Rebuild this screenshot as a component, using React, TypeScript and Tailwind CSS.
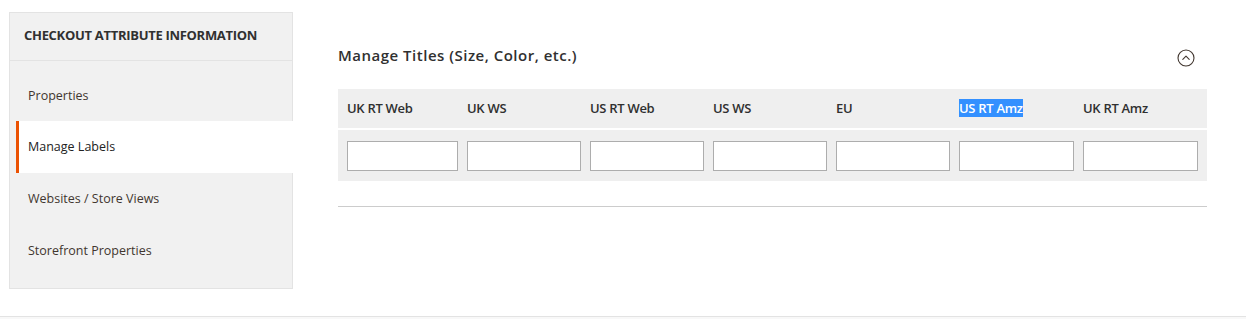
import React from 'react'

const tabs = [
  { label: 'Properties', h: 'h-[51px] pt-[2px]' },
  { label: 'Manage Labels', h: 'h-[52px]', active: true },
  { label: 'Websites / Store Views', h: 'h-[52px]' },
  { label: 'Storefront Properties', h: 'h-[52px]' },
]

const columns = ['UK RT Web', 'UK WS', 'US RT Web', 'US WS', 'EU', 'US RT Amz', 'UK RT Amz']

function CollapseIcon() {
  return (
    <svg width="18" height="18" viewBox="0 0 18 18" fill="none" stroke="#41362f" strokeWidth="1.1">
      <circle cx="9" cy="9" r="8" />
      <path d="M5.8 10.4 L9 7.2 L12.2 10.4" strokeLinecap="round" strokeLinejoin="round" />
    </svg>
  )
}

export default function App() {
  return (
    <div className="w-[1246px] h-[319px] bg-white flex flex-col overflow-hidden" style={{ fontFamily: '"Open Sans", sans-serif' }}>
      <div className="flex flex-1 min-h-0">
        {/* Sidebar */}
        <div className="ml-[9px] mt-[12px] w-[284px] h-[277px] bg-[#f1f1f1] border border-[#e3e3e3] shrink-0">
          <div className="h-[48px] flex items-center px-[14px] pb-[2px] border-b border-[#e3e3e3]">
            <span className="text-[13px] font-bold text-[#303030] tracking-[-0.3px]">CHECKOUT ATTRIBUTE INFORMATION</span>
          </div>
          <div className="pt-[9px]">
            {tabs.map(t => (
              <div
                key={t.label}
                className={`${t.h} flex items-center text-[12.5px] ${t.active
                  ? 'ml-[6px] mr-[-1px] bg-white border-l-[3px] border-[#eb5202] pl-[9px] text-[#222222] font-medium'
                  : 'pl-[18px] text-[#41362f]'}`}
              >
                {t.label}
              </div>
            ))}
          </div>
        </div>

        {/* Content */}
        <div className="ml-[45px] w-[869px] shrink-0">
          <div className="flex items-center justify-between h-[30px] mt-[40px]">
            <span className="text-[15px] font-semibold text-[#303030] tracking-[0.5px]">Manage Titles (Size, Color, etc.)</span>
            <div className="mr-[12px] mt-[5px]">
              <CollapseIcon />
            </div>
          </div>

          <div className="mt-[19px] bg-[#efefef] pl-[9px]">
            <div className="grid grid-cols-[120px_repeat(4,123px)_124px_124px] h-[39px] items-center">
              {columns.map(c => (
                <div key={c} className="text-[13px] font-semibold text-[#303030] tracking-[-0.3px]">
                  {c === 'US RT Amz' ? <span className="bg-[#3390ff] text-white">{c}</span> : c}
                </div>
              ))}
            </div>
            <div className="h-[2px] bg-white ml-[-9px]" />
            <div className="grid grid-cols-[120px_repeat(4,123px)_124px_124px] h-[51px] items-center">
              {columns.map(c => (
                <div key={c} className="pr-[9px]">
                  <input type="text" className="w-full h-[30px] bg-white border border-[#adadad] outline-none" />
                </div>
              ))}
            </div>
          </div>

          <div className="mt-[25px] h-px bg-[#cccccc]" />
        </div>
      </div>

      <div className="h-[3px] border-t border-[#e3e3e3] bg-[#f8f8f8] shrink-0" />
    </div>
  )
}
